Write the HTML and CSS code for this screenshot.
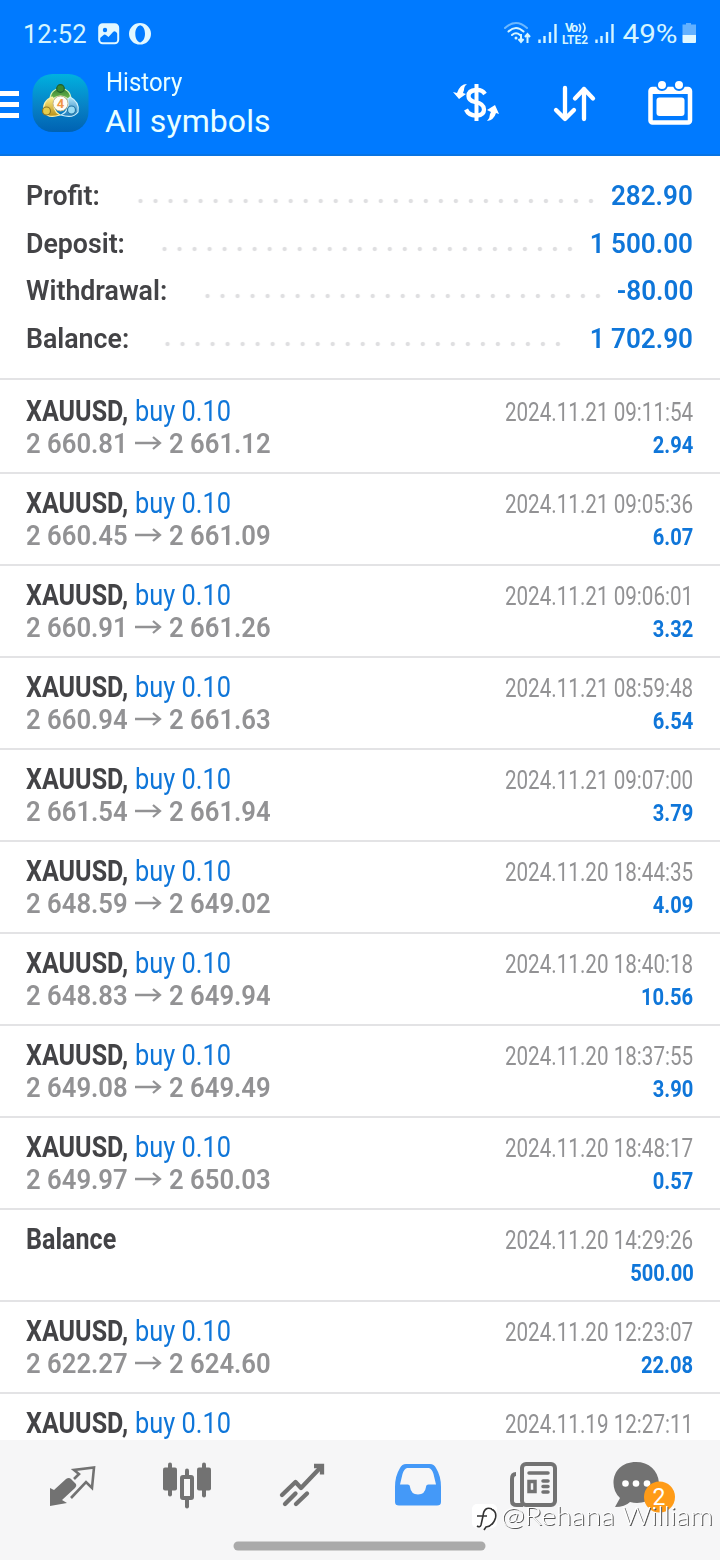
FILE: index.html
```html
<!DOCTYPE html>
<html lang="en">
<head>
<meta charset="utf-8">
<title>History</title>
<link rel="stylesheet" href="styles.css">
</head>
<body>
<div class="app">
  <header class="header">
    <div class="status">
      <span class="clock">12:52</span>
      <svg class="st-photo" width="22" height="22" viewBox="0 0 22 22"><rect x="1.2" y="1.2" width="19" height="19" rx="3.5" fill="none" stroke="#e2f8ff" stroke-width="2"/><path d="M2 2H20V11L18 9Q16.500 7.500 15 9L10.500 14L8 12Q6.500 11 5 12.500L2 15Z" fill="#e2f8ff"/><circle cx="7" cy="7" r="2.2" fill="#007aff"/></svg>
      <svg class="st-opera" width="22" height="22" viewBox="0 0 22 22"><path fill="#e2f8ff" fill-rule="evenodd" d="M11 0A11 10.8 0 1 0 11 21.6A11 10.8 0 1 0 11 0ZM11.2 2.2C14.5 3 16 6.500 16 10.800S14 18.800 11.200 19.400C7.700 18.500 6.300 15 6.300 10.800S8 3 11.200 2.200Z"/></svg>
      <span class="grow"></span>
      <svg class="st-net" width="192" height="28" viewBox="0 0 192 28" fill="none" stroke="#d5f5ff">
        <g stroke-width="2" stroke-linecap="round"><path opacity=".5" d="M2 9Q13-1 24 9"/><path d="M5.500 12.500Q13 5.500 20.500 12.500M9 16Q13 12.500 17 16"/></g>
        <circle cx="13" cy="19" r="1.500" fill="#d5f5ff" stroke="none"/>
        <path stroke-width="2" d="M18 15V23M15.500 20L18 23L20.500 20M24.500 24V15M22 18L24.500 15L27 18"/>
        <path stroke-width="2.400" d="M36.500 24V20.500M41.500 24V17M47 24V13M52.500 24V5M93.500 24V20.500M98.500 24V17M104 24V13M109.500 24V5"/>
        <g fill="#d5f5ff" stroke="none" class="lte"><text x="62" y="13" textLength="13">Vo</text><text x="59" y="25" textLength="26" lengthAdjust="spacingAndGlyphs">LTE2</text></g>
        <path stroke-width="1.700" d="M76 5Q79 9 76 13M80 4Q84 9 80 14"/>
        <text class="pct" x="119.500" y="24" textLength="55" lengthAdjust="spacingAndGlyphs">49%</text>
        <path d="M183 4h5v1.500h5V16H179.500V5.500h3.500Z" fill="#63b1ff" stroke="none"/><path d="M179.500 16h13.500v7q0 1-1 1h-11.500q-1 0-1-1Z" fill="#e2f8ff" stroke="none"/>
      </svg>
    </div>
    <div class="toolbar">
      <span class="menu"><i></i><i></i><i></i></span>
      <svg class="logo" width="58" height="60" viewBox="0 0 58 60">
        <defs>
          <linearGradient id="bg" x2="0" y2="1"><stop stop-color="#00b1df"/><stop offset=".55" stop-color="#0782c6"/><stop offset="1" stop-color="#0062b2"/></linearGradient>
          <linearGradient id="gr" x2="0" y2="1"><stop stop-color="#327e32"/><stop offset="1" stop-color="#8bd35b"/></linearGradient>
          <linearGradient id="ye" x2="0" y2="1"><stop stop-color="#fff08c"/><stop offset="1" stop-color="#b99016"/></linearGradient>
          <linearGradient id="bl" x2="0" y2="1"><stop stop-color="#b3e6fa"/><stop offset="1" stop-color="#1878b8"/></linearGradient>
        </defs>
        <rect x=".5" y="1" width="56" height="58" rx="20" fill="url(#bg)"/>
        <g stroke-width="1.200">
          <path d="M18 30Q17 16 28.500 15.500Q40 16 39 30Q35 23 28.500 23T18 30Z" fill="url(#gr)" stroke="#d8f3b4"/><circle cx="28.500" cy="15.500" r="3.800" fill="#398832" stroke="#205f2c"/>
          <path d="M20 24Q10 28 12 39Q16 46 28 42Q20 38 22 26Z" fill="url(#ye)" stroke="#fff3aa"/><circle cx="14.500" cy="38" r="4" fill="#e6cd4c" stroke="#8b7626"/>
          <path d="M38 24Q48 29 46 39Q41 46 29 42Q38 38 36 26Z" fill="url(#bl)" stroke="#cceffc"/><circle cx="39.500" cy="37" r="4" fill="#9bdcf5" stroke="#2475a5"/>
        </g>
        <circle cx="28.500" cy="30.500" r="7.500" fill="#fffdf7" stroke="#c1b58a"/><text class="four" x="28.500" y="35" text-anchor="middle">4</text>
      </svg>
      <div class="titles"><span class="sub">History</span><span class="title">All symbols</span></div>
      <svg class="t-icon" width="48" height="44" viewBox="0 0 48 44" fill="none" stroke="#fff">
        <path stroke-width="4" d="M23.500 3V40"/><path stroke-width="4.300" d="M32 13Q29 8.500 23 9Q15.500 9.500 15.500 15Q15.500 19.500 22 21Q31 22.500 31 28.500Q31 34 24 34.500Q16 35 13 28.500"/>
        <path fill="#fff" stroke="none" d="M14 3Q11 5 11 9L10 12L13 13L6 18L0 11L4 12Q7 3 14 3ZM34 40Q37 37 37 33L38 31L34 29L42 24L46 33L43 32Q41 39 34 40Z"/>
      </svg>
      <svg class="t-icon sort" width="48" height="44" viewBox="0 0 48 44" fill="none" stroke="#fff" stroke-width="4.300" stroke-linecap="round" stroke-linejoin="round"><path d="M14 7V38M5 29L14 38L23 29"/><path d="M33 38V8M24 17.500L33 8L42 17.500"/></svg>
      <svg class="t-icon" width="48" height="46" viewBox="0 0 48 46"><rect x="4.500" y="8" width="39.500" height="33.500" rx="2" fill="none" stroke="#fff" stroke-width="4.500"/><path fill="#fff" d="M5 7H44V13H5Z"/><rect x="10.500" y="16.500" width="28" height="18.500" rx="3" fill="#fff"/><g fill="#fff" stroke="#007aff" stroke-width="2"><circle cx="16" cy="4" r="5"/><circle cx="33" cy="4" r="5"/></g></svg>
    </div>
  </header>

  <section class="summary">
    <div class="sum"><span class="label">Profit:</span><i class="dots d1"></i><b>282.90</b></div>
    <div class="sum"><span class="label">Deposit:</span><i class="dots d2"></i><b>1 500.00</b></div>
    <div class="sum"><span class="label">Withdrawal:</span><i class="dots d3"></i><b>-80.00</b></div>
    <div class="sum"><span class="label">Balance:</span><i class="dots d4"></i><b>1 702.90</b></div>
  </section>

  <main class="deals" id="deals"></main>

  <nav class="tabs">
    <svg class="tab-icons" width="720" height="120" viewBox="0 0 720 120">
      <g fill="#727272">
        <path d="M50 48L54 50L66 39Q69 37 71 39L76 44Q77 46 75 48L62 60L67 63L50 66Z"/>
        <path fill="none" stroke="#727272" stroke-width="2.600" d="M74 39L79 34L74 30L94 27.500L92 48L86 42L71 58"/>
      </g>
      <g fill="#727272" transform="translate(0 -9.500)">
        <rect x="163" y="37" width="14" height="23" rx="2"/><rect x="168" y="32" width="4" height="34" rx="2"/>
        <rect x="197" y="37" width="14" height="23" rx="2"/><rect x="202" y="32" width="4" height="35" rx="2"/>
        <rect x="185" y="38" width="4" height="40" rx="2"/><rect x="182" y="46.500" width="10" height="21" rx="1" fill="#f7f7f7" stroke="#727272" stroke-width="4"/>
      </g>
      <g transform="translate(0 -10)" fill="none" stroke="#727272" stroke-width="4.300" stroke-linecap="round" stroke-linejoin="round"><path d="M282 65L295.500 52L301 58L320 38"/><path d="M285 74L295.500 63.500M296 74L307 63.500"/><path stroke-linecap="butt" stroke-linejoin="miter" d="M314 36H322V44.500"/></g>
      <path fill="#4499f8" fill-rule="evenodd" d="M406 24H430Q434 24 436 28Q441 36 441 47V62Q441 65.500 437 65.500H399Q395 65.500 395 62V47Q395 36 400 28Q402 24 406 24ZM407 28Q404 29 402.500 34L400 44.500H407.500Q410 44.500 410 47Q411 54.500 418 54.500T426 47Q426 44.500 428.500 44.500H436L433.500 34Q432 29 429 28Z"/>
      <g fill="none" stroke="#727272" stroke-width="4"><rect x="522" y="24" width="33" height="41" rx="4"/><path d="M516 34Q512 34 512 39V61Q512 65 517 65H523"/><path stroke-width="3.500" stroke-linecap="round" d="M529 33H548M543 41H548M543 46.500H548M543 52H548"/><rect x="529" y="41.500" width="6" height="10" stroke-width="3.500"/></g>
      <path fill="#727272" d="M636 22C622 22 613.500 31 613.500 43Q613.500 52 620 58L615 67Q625 67 630 62C646 66 660 56 659 43C658 30 649 22 636 22Z"/>
      <g fill="#fff"><circle cx="625.500" cy="43.500" r="3.300"/><circle cx="636" cy="43.500" r="3.300"/><circle cx="647" cy="43.500" r="3.300"/></g>
      <circle cx="659.500" cy="57" r="15.500" fill="#ff9b17"/><text x="659" y="65" class="badge" text-anchor="middle">2</text>
      <rect x="233.500" y="101.500" width="252" height="9" rx="4.500" fill="#aaa"/>
      <rect class="mark-tile" x="472" y="64" width="25" height="24" rx="5"/>
      <path class="mark-ink" d="M492 69Q484 66 483 76L481 85Q480 88 477 86M477 76H487M491 69Q497 71 495.500 78Q493 86 486 87L484 90"/>
      <g class="mark"><text x="501" y="85" textLength="212" lengthAdjust="spacingAndGlyphs">@Rehana William</text></g>
    </svg>
  </nav>
</div>
<script src="app.js"></script>
</body>
</html>
```
FILE: styles.css
```css
* { box-sizing: border-box; }
body { margin: 0; background: #fff; font-family: Roboto, "Liberation Sans", sans-serif; }
.app { width: 720px; height: 1560px; display: flex; flex-direction: column; overflow: hidden; }

.header { height: 156px; flex: none; background: #007aff; color: #e9ffff; border-bottom: 2px solid #0874e3; }
.status { display: flex; height: 68px; padding: 20px 22px 0 23px; align-items: flex-start; }
.clock { width: 75px; font-size: 25.5px; line-height: 28px; white-space: nowrap; color: #d5f5ff; }
.st-photo { margin-top: 3px; }
.st-opera { margin: 3px 0 0 9px; }
.grow { flex: 1; }
.st-net { margin-right: 3px; margin-top: -1px; overflow: visible; }
.lte { font-size: 12.5px; font-weight: 700; }
.pct { font-size: 26px; fill: #d5f5ff; stroke: none; }
.toolbar { display: flex; height: 86px; }
.menu { width: 19px; flex: none; margin: 23px 13px 0 0; display: flex; flex-direction: column; gap: 6px; }
.menu i { height: 5px; background: #fff; }
.logo { margin-top: 5px; flex: none; }
.four { font-size: 13px; font-weight: 700; fill: #f19545; }
.titles { display: flex; flex-direction: column; flex: none; width: 363px; padding-left: 15px; }
.sub { font-size: 25px; line-height: 30px; transform: scaleX(.96); transform-origin: left; padding-left: 1px; }
.title { font-size: 32px; line-height: 38px; margin-top: 4px; letter-spacing: .1px; }
.t-icon { margin: 13px 50px 0 0; flex: none; overflow: visible; }
.sort { margin-right: 47px; }

.summary { height: 224px; flex: none; padding: 16px 27px 0 26px; border-bottom: 2px solid #e3e3e5; }
.sum { display: flex; height: 47.6px; line-height: 48px; }
.label { font-size: 27px; font-weight: 600; color: #434346; width: 107px; flex: none; white-space: nowrap; transform: scaleX(.99); transform-origin: left; }
.sum b { margin-left: auto; font-size: 27px; font-weight: 600; color: #0f76d9; white-space: nowrap; transform: scaleX(.965); transform-origin: right; }
.dots { height: 6px; flex: none; margin-top: 26px; background: radial-gradient(circle at 7.5px 3px, #dfdfe1 1.7px, transparent 2.6px) 0 0 / 15.03px 6px repeat-x; }
.d1 { width: 466px; }
.d2 { width: 421px; margin-left: 24px; }
.d3 { width: 406px; margin-left: 66.5px; }
.d4 { width: 406px; margin-left: 27px; }

.deals { flex: 1; min-height: 0; overflow: hidden; }
.deal { height: 92px; display: flex; justify-content: space-between; padding: 13px 26px 0; border-bottom: 2px solid #e3e3e5; }
.deal:first-child { height: 94px; padding-top: 15px; }
.left, .right { display: flex; flex-direction: column; white-space: nowrap; }
.right { align-items: flex-end; padding: 2px .5px 0 0; }
.name { font-size: 29px; line-height: 32px; height: 32px; display: flex; }
.sym { width: 109px; font-weight: 700; color: #434346; transform: scaleX(.865); transform-origin: left; }
.side { color: #0f76d9; transform: scaleX(.875); transform-origin: left; }
.prices { display: flex; color: #929294; font-size: 28px; line-height: 33px; font-weight: 600; height: 33px; }
.price { width: 109px; transform: scaleX(.917); transform-origin: left; }
.arrow { margin: 8px 7px 0 0; flex: none; }
.date { font-size: 25px; line-height: 32px; color: #929294; transform: scaleX(.825); transform-origin: right; }
.gain { font-size: 24px; line-height: 32px; font-weight: 700; color: #0f76d9; transform: scaleX(.84); transform-origin: right; }

.tabs { height: 120px; flex: none; background: #f6f6f7; }
.tab-icons { display: block; }
.badge { font-size: 23px; fill: #fff; }
.mark text { font-family: Lato, "Noto Sans", sans-serif; font-weight: 300; font-size: 26px; fill: #fff; }
.mark { filter: drop-shadow(1px 1px .3px #555); }
.mark-tile { fill: #fff; }
.mark-ink { fill: none; stroke: #333; stroke-width: 1.6; }
```
FILE: app.js
```js
const deals = [
  ["2 660.81", "2 661.12", "2024.11.21 09:11:54", "2.94"],
  ["2 660.45", "2 661.09", "2024.11.21 09:05:36", "6.07"],
  ["2 660.91", "2 661.26", "2024.11.21 09:06:01", "3.32"],
  ["2 660.94", "2 661.63", "2024.11.21 08:59:48", "6.54"],
  ["2 661.54", "2 661.94", "2024.11.21 09:07:00", "3.79"],
  ["2 648.59", "2 649.02", "2024.11.20 18:44:35", "4.09"],
  ["2 648.83", "2 649.94", "2024.11.20 18:40:18", "10.56"],
  ["2 649.08", "2 649.49", "2024.11.20 18:37:55", "3.90"],
  ["2 649.97", "2 650.03", "2024.11.20 18:48:17", "0.57"],
  [null, null, "2024.11.20 14:29:26", "500.00"],
  ["2 622.27", "2 624.60", "2024.11.20 12:23:07", "22.08"],
  ["", "", "2024.11.19 12:27:11", ""]
];
const arrow = '<svg class="arrow" width="27" height="16" viewBox="0 0 27 16" fill="none" stroke="#929294" stroke-width="2.3"><path d="M0 8H25M18 2L25 8L18 14"/></svg>';
document.getElementById("deals").innerHTML = deals.map(([open, close, date, gain]) => `
  <div class="deal">
    <div class="left">
      ${open === null
        ? '<div class="name"><span class="sym">Balance</span></div>'
        : '<div class="name"><span class="sym">XAUUSD,</span><span class="side">buy 0.10</span></div>'}
      ${open ? `<div class="prices"><span class="price">${open}</span>${arrow}<span class="price">${close}</span></div>` : ""}
    </div>
    <div class="right"><span class="date">${date}</span><span class="gain">${gain}</span></div>
  </div>`).join("");
```
